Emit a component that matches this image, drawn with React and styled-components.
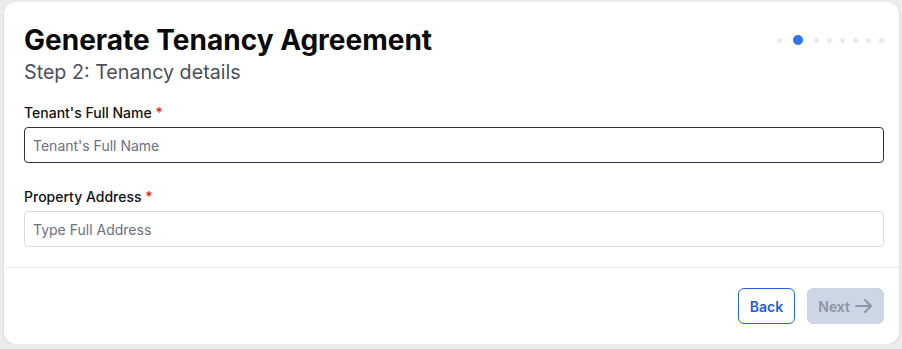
import React from "react";
import styled, { createGlobalStyle } from "styled-components";

const GlobalStyle = createGlobalStyle`
  body {
    margin: 0;
    background: #ececee;
    font-family: Inter, "Noto Sans", sans-serif;
    color: #111;
  }
`;

const Page = styled.div`
  padding: 2px 3px 0 4px;
`;

const Card = styled.div`
  background: #fff;
  border-radius: 12px;
  box-shadow: 0 1px 3px rgba(0, 0, 0, 0.12);
  height: 342px;
  display: flex;
  flex-direction: column;
`;

const Body = styled.div`
  padding: 20px 14px 20px 20px;
  display: flex;
  flex-direction: column;
  gap: 24px;
`;

const Header = styled.div`
  display: flex;
  justify-content: space-between;
  align-items: flex-start;
  margin-bottom: -5px;
`;

const Title = styled.h1`
  margin: 0;
  font-size: 28px;
  line-height: 36px;
  font-weight: 700;
  color: #0a0a0a;
`;

const Subtitle = styled.div`
  margin-top: 2px;
  font-size: 19.7px;
  line-height: 24px;
  color: #4b4f57;
`;

const Dots = styled.div`
  display: flex;
  align-items: center;
  gap: 8px;
  margin-top: 13px;
  padding-right: 1px;
`;

const Dot = styled.span`
  width: ${(p) => (p.$active ? 10 : 5)}px;
  height: ${(p) => (p.$active ? 10 : 5)}px;
  margin: 0 ${(p) => (p.$active ? 3 : 0)}px;
  border-radius: 50%;
  background: ${(p) => (p.$active ? "#2f74f0" : "#e6e9f0")};
`;

const Field = styled.div`
  margin-right: 1px;
`;

const Label = styled.label`
  display: block;
  font-size: 14px;
  line-height: 20px;
  font-weight: 500;
  margin-bottom: 4px;
  color: #111;
`;

const Required = styled.span`
  color: #e0242f;
`;

const Input = styled.input`
  box-sizing: border-box;
  width: 100%;
  height: 36px;
  padding: 0 8px;
  font-family: Inter, "Noto Sans", sans-serif;
  font-size: 14px;
  color: #111;
  border: 1px solid ${(p) => (p.$focused ? "#2d3340" : "#d9dce2")};
  border-radius: 4px;
  outline: none;
  &::placeholder {
    color: #6b7180;
  }
`;

const Footer = styled.div`
  border-top: 1px solid #e8e9ec;
  display: flex;
  justify-content: flex-end;
  gap: 12px;
  padding: 20px 15px 20px 20px;
`;

const Button = styled.button`
  height: 36px;
  padding: 0 ${(p) => (p.$primary ? 10 : 11)}px;
  border-radius: 6px;
  font-family: Inter, "Noto Sans", sans-serif;
  font-size: 14px;
  font-weight: 600;
  display: flex;
  align-items: center;
  gap: 5px;
  border: 1px solid ${(p) => (p.$primary ? "#cdd6e4" : "#2563eb")};
  background: ${(p) => (p.$primary ? "#cdd6e4" : "#fff")};
  color: ${(p) => (p.$primary ? "#8d96a6" : "#1d5ed8")};
`;

export default function App() {
  return (
    <>
      <GlobalStyle />
      <Page>
        <Card>
          <Body>
            <Header>
              <div>
                <Title>Generate Tenancy Agreement</Title>
                <Subtitle>Step 2: Tenancy details</Subtitle>
              </div>
              <Dots>
                {[0, 1, 2, 3, 4, 5, 6, 7].map((i) => (
                  <Dot key={i} $active={i === 1} />
                ))}
              </Dots>
            </Header>
            <Field>
              <Label>
                Tenant's Full Name <Required>*</Required>
              </Label>
              <Input $focused autoFocus placeholder="Tenant's Full Name" />
            </Field>
            <Field>
              <Label>
                Property Address <Required>*</Required>
              </Label>
              <Input placeholder="Type Full Address" />
            </Field>
          </Body>
          <Footer>
            <Button>Back</Button>
            <Button $primary disabled>
              Next
              <svg width="18" height="14" viewBox="0 0 18 14" fill="none" stroke="currentColor" strokeWidth="2" strokeLinecap="round" strokeLinejoin="round">
                <path d="M1 7h15M10 1l6 6-6 6" />
              </svg>
            </Button>
          </Footer>
        </Card>
      </Page>
    </>
  );
}
